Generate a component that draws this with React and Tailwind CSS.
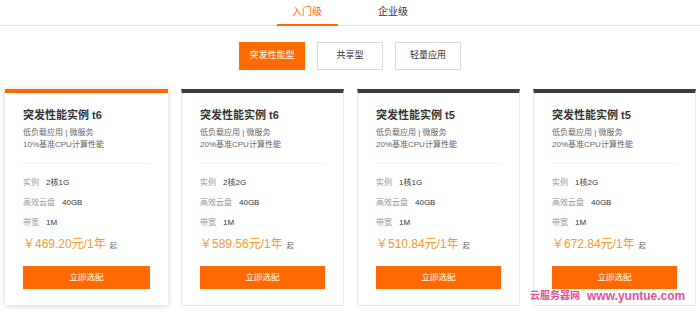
import React from "react";

const cards = [
  { name: "突发性能实例 t6", perf: "10%基准CPU计算性能", cpu: "2核1G", price: "￥469.20元/1年", active: true },
  { name: "突发性能实例 t6", perf: "20%基准CPU计算性能", cpu: "2核2G", price: "￥589.56元/1年" },
  { name: "突发性能实例 t5", perf: "20%基准CPU计算性能", cpu: "1核1G", price: "￥510.84元/1年" },
  { name: "突发性能实例 t5", perf: "20%基准CPU计算性能", cpu: "1核2G", price: "￥672.84元/1年" },
];

function Spec({ label, value }) {
  return (
    <div className="flex h-5 items-center text-[8px] leading-none">
      <span className="text-[#999]">{label}</span>
      <span className="ml-[7px] text-[#333]">{value}</span>
    </div>
  );
}

function Card({ card }) {
  return (
    <div
      className={
        "w-[163px] bg-white " +
        (card.active
          ? "border-t-4 border-[#ff6a00] shadow-[0_1px_6px_rgba(0,0,0,0.18)]"
          : "border border-t-4 border-[#e8e8e8] border-t-[#3a3a3a]")
      }
    >
      <div className="px-[18px] pt-[14px] pb-4">
        <h3 className="text-[11px] font-bold leading-4 text-[#333]">{card.name}</h3>
        <div className="mt-1 text-[8px] leading-3 text-[#666]">
          <p>低负载应用 | 微服务</p>
          <p>{card.perf}</p>
        </div>
        <div className="mt-3 border-t border-[#eee]" />
        <div className="mt-[9px]">
          <Spec label="实例" value={card.cpu} />
          <Spec label="高效云盘" value="40GB" />
          <Spec label="带宽" value="1M" />
        </div>
        <div className="mt-px flex h-5 items-center">
          <span className="text-[12px] text-[#f39a2a]">{card.price}</span>
          <span className="ml-1 mt-1 text-[7px] text-[#666]">起</span>
        </div>
        <button className="mt-3 flex h-[23px] w-full items-center justify-center bg-[#ff6a00] text-[8.5px] text-white">
          立即选配
        </button>
      </div>
    </div>
  );
}

export default function App() {
  return (
    <div
      className="relative h-[317px] w-[700px] overflow-hidden bg-white"
      style={{ fontFamily: '"Liberation Sans", "Noto Sans CJK SC", sans-serif' }}
    >
      {/* level tabs */}
      <div className="flex h-[26px] justify-center gap-[25px] border-b border-[#e6e6e6]">
        <div className="flex h-[26px] w-[61px] items-start justify-center border-b-2 border-[#ff6a00] pt-[4px] text-[10px] text-[#ff6a00]">
          入门级
        </div>
        <div className="flex h-[26px] w-[61px] items-start justify-center pt-[4px] text-[10px] text-[#333]">
          企业级
        </div>
      </div>

      {/* type filter */}
      <div className="mt-4 flex justify-center gap-3">
        <button className="h-[28px] w-[66px] bg-[#ff6a00] text-[9px] text-white">突发性能型</button>
        <button className="h-[28px] w-[66px] border border-[#ddd] text-[9px] text-[#333]">共享型</button>
        <button className="h-[28px] w-[66px] border border-[#ddd] text-[9px] text-[#333]">轻量应用</button>
      </div>

      {/* cards */}
      <div className="ml-[5px] mt-[19px] flex items-start gap-[13px]">
        {cards.map((c, i) => (
          <Card key={i} card={c} />
        ))}
      </div>

      {/* watermark */}
      <div className="absolute left-[530px] top-[290px] flex items-center gap-[7px] font-bold leading-none text-[#e3509b]">
        <span className="text-[10px]">云服务器网</span>
        <span className="text-[12px]">www.yuntue.com</span>
      </div>
    </div>
  );
}
